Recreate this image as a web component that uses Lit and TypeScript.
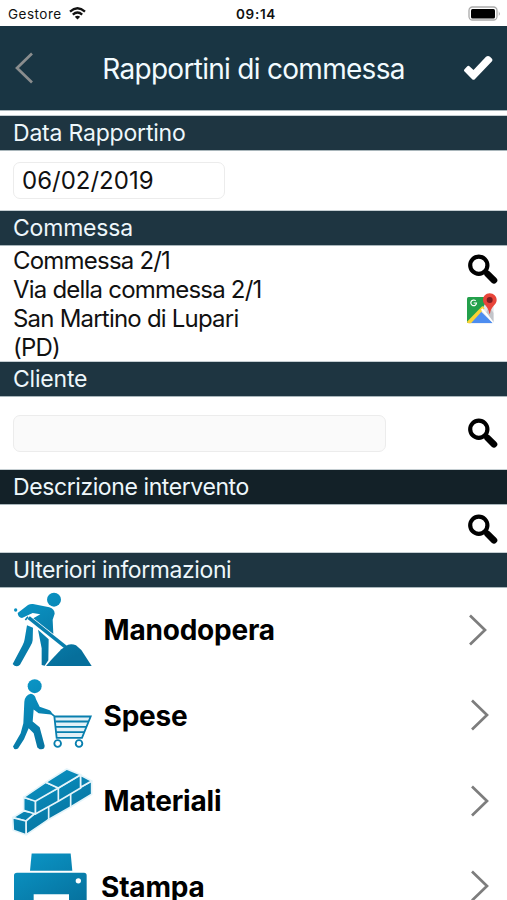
import { LitElement, html, css, svg, nothing } from "lit";
import { customElement, property } from "lit/decorators.js";

const searchIcon = html`<svg class="search" width="30" height="30" viewBox="0 0 30 30">
  <circle cx="10.8" cy="11.2" r="8.6" fill="none" stroke="#000" stroke-width="4.2" />
  <path d="M16.5 17L20 20.500" stroke="#000" stroke-width="4.500" />
  <path d="M19.600 20L26 26.300" stroke="#000" stroke-width="6.600" stroke-linecap="round" />
</svg>`;

const mapsIcon = html`<svg class="maps" width="30" height="31" viewBox="0 0 90 93">
  <defs><clipPath id="tile"><rect x="0" y="12" width="80" height="79" rx="5" /></clipPath></defs>
  <g clip-path="url(#tile)">
    <rect width="90" height="93" fill="#e4e6ea" />
    <path d="M0 0H72L46 47L2 91H0Z" fill="#23a04b" />
    <path d="M41 55L78 91H6Z" fill="#4d8df0" />
    <path d="M-2 88L46 39L53 46L8 95Z" fill="#fbd233" />
    <path d="M44 48L82 91" stroke="#fff" stroke-width="6" />
    <path d="M66 40L80 60V88L58 58Z" fill="#c3c5ca" />
  </g>
  <path d="M26 23.500A8.500 8.500 0 1 0 28.500 30H20" fill="none" stroke="#fff" stroke-width="3.600" />
  <path d="M68 1C56 1 48 10 48 21C48 36 64 39 67 62H69C72 39 89 36 89 21C89 10 80 1 68 1Z" fill="#e8453a" />
  <circle cx="68" cy="21" r="9" fill="#7d1d22" />
</svg>`;

const art: Record<string, unknown> = {
  worker: svg`
    <circle cx="162" cy="44" r="21" />
    <circle cx="47" cy="75" r="5" />
    <path d="M53 84L84 60Q91 56 99 57L148 67Q164 72 164 86L158 104L160 147L100 100L121 88L98 84L66 99Q54 98 53 84Z" />
    <path d="M81 121L99 128L98 166Q97 176 91 184L60 239Q48 249 38 237L67 182Q73 172 74 162Z" />
    <path d="M114 134L146 163L145 226L134 242L125 240V190Z" />
    <path d="M86 98L198 187" fill="none" stroke-width="11" class="line" />
    <path d="M76 105L84 95" fill="none" stroke-width="5" class="line" />
    <path d="M138 243L154 224L184 193L204 179Q216 175 228 181L244 195L275 243Z" />`,
  cart: svg`
    <circle cx="104" cy="47" r="21" />
    <path d="M92 70Q104 71 108 86L119 109L149 119Q158 124 153 132L116 128L101 117L98 153L119 170L134 226Q134 239 119 236L112 231L101 188L86 173L72 206L54 234Q43 241 39 228L62 188L70 158L73 94Q75 74 92 70Z" />
    <path d="M163 138H272L246 202H170Z" class="basket" />
    <g fill="none" class="line" stroke-width="5.5">
      <path d="M151 127L163 137L170 202H246L272 138H163" />
      <path d="M166 153H265M168 169H258M169 185H252" />
      <circle cx="173" cy="219" r="10" /><circle cx="237" cy="219" r="10" />
    </g>`,
  bricks: svg`
    <g class="mortar">
      <path d="M77 177L144 138L206 101L275 63V103L212 141L142 181L79 224Z" />
      <path d="M38 173L71 153L106 159L78 183Z" />
      <path d="M38 173L78 183V224L40 211Z" />
      <path d="M106 120L175 84L242 44V84L175 124L106 162Z" />
      <path d="M71 112L106 122V162L71 151Z" />
      <path d="M71 112L137 67L175 84L106 124Z" />
      <path d="M137 67L200 27L242 44L175 84Z" />
      <path d="M242 46L275 63L242 82Z" />
      <path d="M146 140V180M212 102V142M175 83V124" fill="none" />
    </g>`,
  printer: svg`
    <path d="M95 39H212L217 91H90Z" />
    <path fill-rule="evenodd" d="M51 97H252Q260 97 260 105V270H42V105Q42 97 51 97ZM101 161H207V270H101Z" />
    <circle cx="235" cy="121" r="8" fill="#fff" />`,
};

@customElement("section-title")
class SectionTitle extends LitElement {
  static styles = css`
    :host {
      display: block;
      box-sizing: border-box;
      height: 34px;
      padding-left: 13px;
      background: #1e3541;
      color: #eef7fb;
      font-size: 23px;
      line-height: 35px;
      letter-spacing: -0.2px;
      white-space: nowrap;
      box-shadow: 0 1px #a9b6bb, 0 -1px #c5ced2;
    }
    :host([dark]) { background: #132128; }
    :host([tight]) { letter-spacing: -0.41px; }
  `;
  render() { return html`<slot></slot>`; }
}

@customElement("menu-row")
class MenuRow extends LitElement {
  @property() icon = "";
  @property() label = "";
  @property({ type: Number }) shift = 0;
  static styles = css`
    :host { display: flex; height: 85.5px; align-items: center; }
    .art { flex: none; width: 100px; height: 85.5px; }
    .line { stroke: #087fae; }
    .basket { fill: #e2f1f7; }
    .mortar { stroke: #e4f4fa; stroke-width: 5; stroke-linejoin: round; }
    .label { flex: 1; margin-left: 3.5px; padding-top: 1px; font-size: 28px; font-weight: 700; letter-spacing: -0.2px; line-height: 34px; color: #000; }
    .stampa { margin-left: 1px; }
    .chevron { flex: none; margin-right: 17px; }
    .first { margin-right: 19px; }
  `;
  render() {
    return html`
      <svg class="art" viewBox="0 ${this.shift} 300 256.5">
        <defs>
          <linearGradient id="tone" gradientUnits="userSpaceOnUse" x1="60" y1="20" x2="180" y2="240">
            <stop offset="0" stop-color="#0b98c9" /><stop offset="1" stop-color="#066f9b" />
          </linearGradient>
        </defs>
        <g fill="url(#tone)">${art[this.icon] ?? nothing}</g>
      </svg>
      <span class="label ${this.label.toLowerCase()}">${this.label}</span>
      <svg class="chevron ${this.icon === "worker" ? "first" : ""}" width="20" height="32" viewBox="0 0 20 32">
        <path d="M2 1.500L17 16L2 30.500" fill="none" stroke="#7d7d7d" stroke-width="2.700" />
      </svg>`;
  }
}

@customElement("app-root")
class AppRoot extends LitElement {
  static styles = css`
    :host {
      display: block;
      height: 900px;
      overflow: hidden;
      background: #fff;
      color: #111;
      font-family: Inter, "Liberation Sans", sans-serif;
    }
    .status { display: grid; grid-template-columns: 1fr auto 1fr; align-items: center; height: 26px; padding: 1px 6px 0 8px; box-sizing: border-box; font-size: 13.5px; }
    .carrier { display: flex; align-items: center; gap: 7px; letter-spacing: 0.5px; }
    .clock { font-weight: 600; letter-spacing: 0.7px; padding-left: 3px; }
    .battery { justify-self: end; }
    .header { display: flex; align-items: center; height: 84px; margin-bottom: 6px; background: #193543; color: #f2fbff; box-shadow: 0 1px #a9b6bb; }
    .back { margin-left: 14px; }
    .title { flex: 1; text-align: center; font-size: 28px; letter-spacing: -0.71px; line-height: 34px; white-space: nowrap; padding: 2px 0 0 11px; }
    .check { margin-right: 13px; }
    .field { box-sizing: border-box; height: 37px; border: 1px solid #ececec; border-radius: 7px; font-size: 24px; line-height: 36px; padding-left: 8px; }
    .date-row { display: flex; align-items: center; height: 61px; padding-left: 13px; }
    .date { width: 212px; }
    .job { display: flex; justify-content: space-between; height: 117px; }
    .address { padding: 1px 0 0 13px; font-size: 24px; letter-spacing: -0.79px; line-height: 29px; white-space: nowrap; }
    .tools { display: flex; flex-direction: column; gap: 9px; padding: 9px 9px 0 0; }
    .maps { margin-left: -1px; }
    .client { display: flex; align-items: center; justify-content: space-between; height: 74px; padding: 0 9px 0 13px; }
    .name { width: 373px; background: #fafafa; }
    .note { display: flex; justify-content: flex-end; align-items: center; height: 49px; padding-right: 9px; }
  `;
  render() {
    return html`
      <div class="status">
        <span class="carrier"><span>Gestore</span>
          <svg width="17" height="13" viewBox="0 0 17 13" fill="none" stroke="#111" stroke-width="2.300">
            <path d="M1 4.600Q8.500 -2 16 4.600M3.800 7.600Q8.500 3.400 13.200 7.600" />
            <path d="M8.500 12.500L5.800 9.700Q8.500 7.600 11.200 9.700Z" fill="#111" stroke="none" />
          </svg></span>
        <span class="clock">09:14</span>
        <svg class="battery" width="33" height="15" viewBox="0 0 33 15">
          <rect x="1" y="1" width="28" height="13" rx="3.500" fill="#fff" stroke="#aaa" stroke-width="1.300" />
          <rect x="3" y="3" width="24" height="9.500" rx="1.500" fill="#000" />
          <path d="M30.800 5Q32.500 7.500 30.800 10Z" fill="#999" />
        </svg>
      </div>
      <div class="header">
        <svg class="back" width="20" height="32" viewBox="0 0 20 32"><path d="M18 1.500L3 16L18 30.500" fill="none" stroke="#8a8d8e" stroke-width="2.700" /></svg>
        <span class="title">Rapportini di commessa</span>
        <svg class="check" width="32" height="28" viewBox="0 0 32 28"><path d="M2.300 15.500L5.300 12.300Q6.500 11.300 7.700 12.400L11.500 16L24 2.800Q26 1.200 28 2.800L30 4.800Q31 6 30 7.200L12.800 25.300Q11.500 26.300 10.200 25.300L2.300 17.300Q1.600 16.400 2.300 15.500Z" fill="#fff" /></svg>
      </div>
      <section-title>Data Rapportino</section-title>
      <div class="date-row"><div class="field date">06/02/2019</div></div>
      <section-title>Commessa</section-title>
      <div class="job">
        <div class="address">Commessa 2/1<br />Via della commessa 2/1<br />San Martino di Lupari<br />(PD)</div>
        <div class="tools">${searchIcon}${mapsIcon}</div>
      </div>
      <section-title>Cliente</section-title>
      <div class="client"><div class="field name"></div>${searchIcon}</div>
      <section-title dark tight>Descrizione intervento</section-title>
      <div class="note">${searchIcon}</div>
      <section-title tight>Ulteriori informazioni</section-title>
      <menu-row icon="worker" label="Manodopera" .shift=${6}></menu-row>
      <menu-row icon="cart" label="Spese" .shift=${7.5}></menu-row>
      <menu-row icon="bricks" label="Materiali" .shift=${-6}></menu-row>
      <menu-row icon="printer" label="Stampa" .shift=${10.5}></menu-row>`;
  }
}
